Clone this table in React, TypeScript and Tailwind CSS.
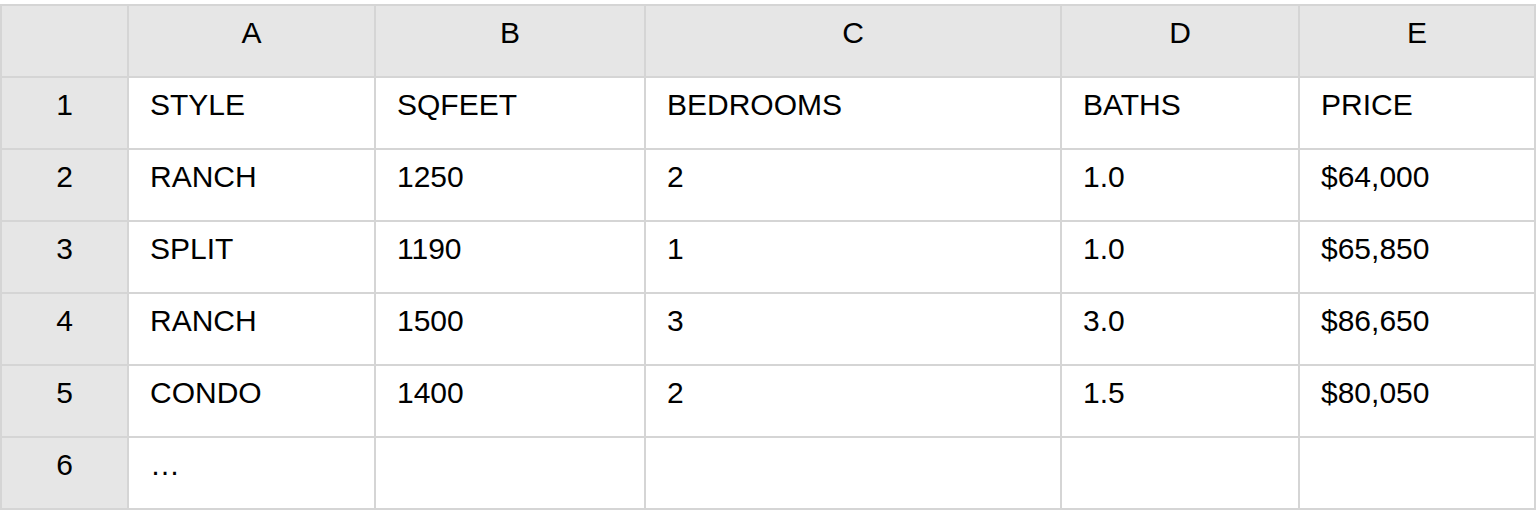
import React from "react";

const cols = ["A", "B", "C", "D", "E"];
const rows: string[][] = [
  ["STYLE", "SQFEET", "BEDROOMS", "BATHS", "PRICE"],
  ["RANCH", "1250", "2", "1.0", "$64,000"],
  ["SPLIT", "1190", "1", "1.0", "$65,850"],
  ["RANCH", "1500", "3", "3.0", "$86,650"],
  ["CONDO", "1400", "2", "1.5", "$80,050"],
  ["…", "", "", "", ""],
];

export default function App() {
  return (
    <div
      className="w-[1536px] h-[510px] bg-white pt-[4px]"
      style={{ fontFamily: '"Liberation Sans", Arial, sans-serif' }}
    >
      <div className="grid grid-cols-[125px_245px_268px_414px_236px_234px] auto-rows-[70px] gap-[2px] p-[2px] bg-[#d5d5d5] text-[30px] text-black leading-[34px]">
        <div className="bg-[#e6e6e6]" />
        {cols.map((c) => (
          <div key={c} className="bg-[#e6e6e6] flex items-center justify-center pb-[16px]">
            {c}
          </div>
        ))}
        {rows.map((r, i) => (
          <React.Fragment key={i}>
            <div className="bg-[#e6e6e6] flex items-center justify-center pb-[16px]">
              {i + 1}
            </div>
            {r.map((v, j) => (
              <div key={j} className="bg-white flex items-center pl-[21px] pb-[16px]">
                {v}
              </div>
            ))}
          </React.Fragment>
        ))}
      </div>
    </div>
  );
}
